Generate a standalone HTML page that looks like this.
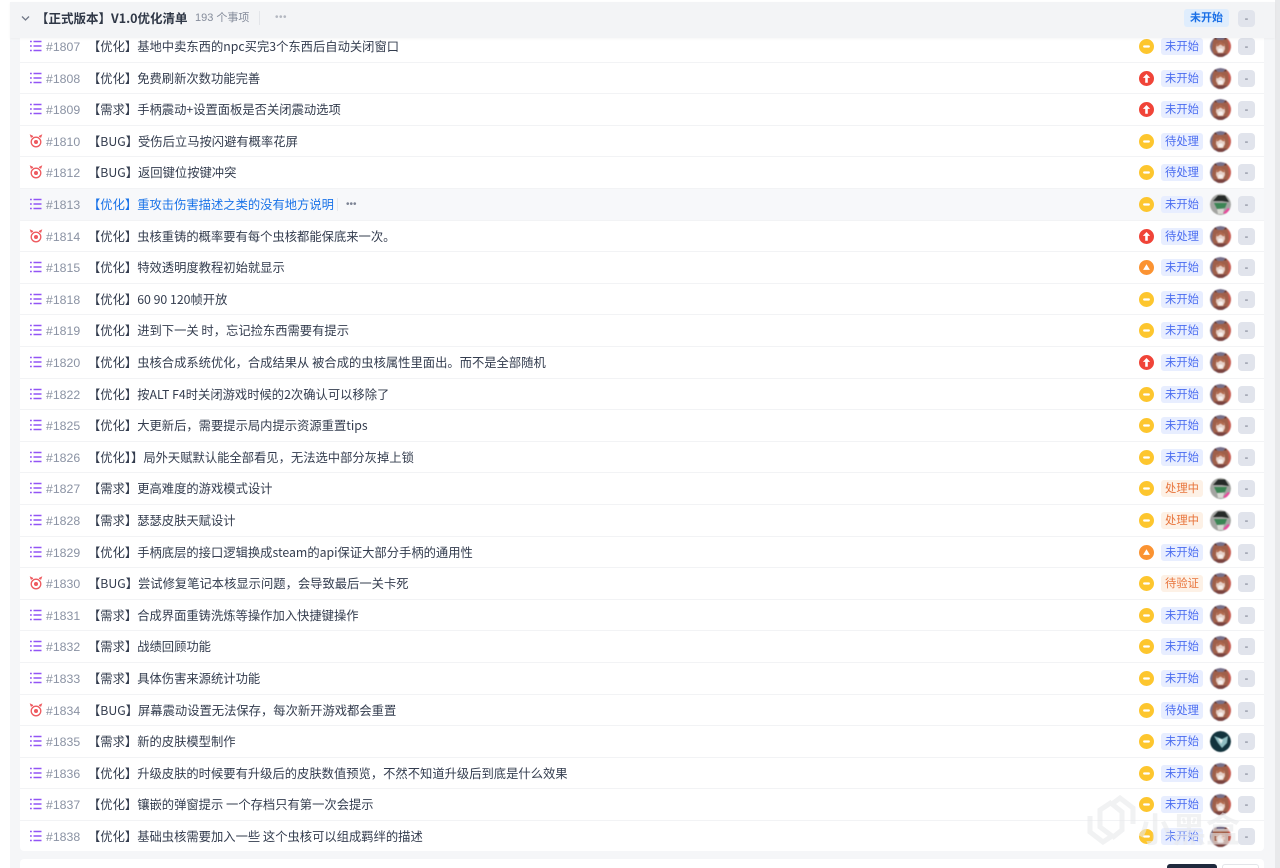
<!DOCTYPE html>
<html lang="zh-CN"><head><meta charset="utf-8"><title>V1.0优化清单</title>
<style>
html,body{margin:0;padding:0;width:1280px;height:868px;overflow:hidden;background:#fff}
body{position:relative;font-family:"Liberation Sans","Noto Sans CJK SC",sans-serif;font-size:12px;color:#333c4e}
.bg{position:absolute;left:10px;top:2px;width:1265px;height:866px;background:#f5f6f8}
.sb{position:absolute;left:1275px;top:0;width:5px;height:868px;background:#e8e9eb}
.hd{position:absolute;left:10px;top:2px;width:1265px;height:36px;background:#f3f4f6;box-shadow:0 1px 2px rgba(0,0,0,.04);z-index:3}
.list{position:absolute;left:20px;top:31px;width:1244px;height:820px;background:#fff;border-radius:0 0 4px 4px;overflow:hidden;filter:blur(.25px)}
.r{position:absolute;left:0;width:1244px;height:31.6px;box-sizing:border-box;border-bottom:1px solid #f2f3f5}
.r.last{border:0}
.r.h{background:#f7f8fa}
.r>*{position:absolute}
.ic{left:9px;top:8px;width:14px;height:14px}
.n{left:26px;top:8px;line-height:16px;font-size:12.3px;color:#8a92a3;white-space:nowrap}
.t{left:68px;top:7px;line-height:16px;font-size:12.3px;font-family:"Noto Sans CJK SC","Liberation Sans",sans-serif;white-space:nowrap}
.h .t{color:#1a73e8}
.p{left:1119px;top:8px;width:15px;height:15px}
.s{left:1141px;top:7px;width:42px;height:17px;line-height:17px;text-align:center;border-radius:3px;background:#e8eeff;color:#4a6cf0;font-size:11.3px;font-family:"Noto Sans CJK SC",sans-serif}
.s.o{background:#fdf1e6;color:#e8743b}
.a{left:1190px;top:5px;width:21px;height:21px;border-radius:50%;filter:blur(.5px)}
.d{left:1218px;top:7px;width:17px;height:17px;border-radius:4px;background:#e1e4ec;color:#6a7080;text-align:center;line-height:18px;font-size:11px}
.x{position:absolute;z-index:4;white-space:nowrap}
.foot{position:absolute;left:20px;top:859px;width:1244px;height:20px;background:#fff;border-radius:4px}
.wm{position:absolute;left:1085px;top:792px;z-index:6;opacity:.6}
</style></head><body>
<svg width="0" height="0" style="position:absolute">
<defs>
<symbol id="l" viewBox="0 0 14 14"><g fill="none" stroke="#9255f5" stroke-width="1.500"><path d="M4.500 2.500H12.500M4.500 7H12.500M4.500 11.500H12.500"/><path d="M1 2.500H2.800M1 7H2.800M1 11.500H2.800"/></g></symbol>
<symbol id="b" viewBox="0 0 14 14"><g fill="none" stroke="#ee5a5f" stroke-width="1.300"><circle cx="7" cy="8" r="4.800"/><path d="M2.500 3.600 1.800 1.500 4 2.600M11.500 3.600 12.200 1.500 10 2.600"/></g><circle cx="7" cy="8" r="2" fill="#ee5a5f"/></symbol>
<symbol id="py" viewBox="0 0 14 14"><circle cx="7" cy="7" r="7" fill="#fdc62e"/><rect x="3.800" y="6" width="6.400" height="2" rx="1" fill="#fff"/></symbol>
<symbol id="pr" viewBox="0 0 14 14"><circle cx="7" cy="7" r="7" fill="#f04438"/><path d="M7 2.800 10.400 6.400H8.200V11H5.800V6.400H3.600Z" fill="#fff"/></symbol>
<symbol id="po" viewBox="0 0 14 14"><circle cx="7" cy="7" r="7" fill="#fb9332"/><path d="M7 4 10.200 9.200H3.800Z" fill="#fff"/></symbol>
<symbol id="a1" viewBox="0 0 21 21"><circle cx="10.500" cy="10.500" r="10.500" fill="#77708a"/><path d="M15 0A10.500 10.500 0 0 1 21 10.500 10.500 10.500 0 0 1 17 19Z" fill="#cb5a4e"/><path d="M3 5 5 1 8 4 13 4 16 1 18 5 19 13 17 19H4L2 13Z" fill="#a0604a"/><path d="M4.500 3 5 1 7 3.500ZM16.500 3 16 1 14 3.500Z" fill="#4b2b2a"/><path d="M6.500 8H14.500L15 13 13 17H8L6 13Z" fill="#e6cfc6"/><path d="M6 9 10.500 5.500 15 9 13.500 10.500 10.500 8.500 7.500 10.500Z" fill="#b0694e"/><path d="M8.500 12.500H12.500L13 15.500 10.500 16.500 8 15.500Z" fill="#f6efec"/><path d="M4 17.500H17L13 21H8Z" fill="#7a4440"/></symbol>
<symbol id="a2" viewBox="0 0 21 21"><circle cx="10.500" cy="10.500" r="10.500" fill="#a3a4a1"/><path d="M3 7 8 1.500 15 1.500 19 8 12 7Z" fill="#252a28"/><path d="M4 9H17L15 14 7 15Z" fill="#3b8554"/><path d="M7 15H14L13 20H8Z" fill="#d7d9d3"/><path d="M13 19 18 14 20 15 16 20Z" fill="#e84a9c"/></symbol>
<symbol id="a3" viewBox="0 0 21 21"><circle cx="10.500" cy="10.500" r="10.500" fill="#12333d"/><path d="M4 5 12 8 18 5 17 12 12 17 8 12Z" fill="#8fbdc1"/><path d="M8 7 13 9 11 13Z" fill="#e2f0f0"/></symbol>
</defs></svg>

<div class="bg"></div><div class="sb"></div>
<div class="hd"></div>
<svg class="x" style="left:21px;top:15px" width="9" height="7" viewBox="0 0 9 7"><path d="M1 1.500 4.500 5 8 1.500" fill="none" stroke="#717887" stroke-width="1.300"/></svg>
<div class="x" style="left:36px;top:9px;line-height:18px;font-size:12.500px;font-weight:700;color:#2f3746;font-family:'Noto Sans CJK SC',sans-serif">【正式版本】V1.0优化清单</div>
<div class="x" style="left:195px;top:10px;line-height:16px;font-size:11px;color:#858c9b">193 个事项</div>
<div class="x" style="left:259px;top:11px;width:1px;height:14px;background:#e3e5e9"></div>
<div class="x" style="left:275px;top:11px;line-height:14px;font-size:10px;color:#b4b8c1;letter-spacing:.5px">•••</div>
<div class="x" style="left:1184px;top:9px;width:45px;height:18px;line-height:19px;text-align:center;border-radius:3px;background:#dfedfd;color:#1a6fe6;font-size:11px;font-weight:700">未开始</div>
<div class="x" style="left:1238px;top:10px;width:17px;height:17px;border-radius:4px;background:#e1e4ec;color:#6a7080;text-align:center;line-height:18px;font-size:11px">-</div>

<div class="list">
<div class="r" style="top:0"><svg class="ic"><use href="#l"/></svg><span class="n">#1807</span><span class="t">【优化】基地中卖东西的npc买完3个东西后自动关闭窗口</span><svg class="p"><use href="#py"/></svg><span class="s">未开始</span><svg class="a"><use href="#a1"/></svg><span class="d">-</span></div>
<div class="r" style="top:31.6px"><svg class="ic"><use href="#l"/></svg><span class="n">#1808</span><span class="t">【优化】免费刷新次数功能完善</span><svg class="p"><use href="#pr"/></svg><span class="s">未开始</span><svg class="a"><use href="#a1"/></svg><span class="d">-</span></div>
<div class="r" style="top:63.2px"><svg class="ic"><use href="#l"/></svg><span class="n">#1809</span><span class="t">【需求】手柄震动+设置面板是否关闭震动选项</span><svg class="p"><use href="#pr"/></svg><span class="s">未开始</span><svg class="a"><use href="#a1"/></svg><span class="d">-</span></div>
<div class="r" style="top:94.8px"><svg class="ic"><use href="#b"/></svg><span class="n">#1810</span><span class="t">【BUG】受伤后立马按闪避有概率花屏</span><svg class="p"><use href="#py"/></svg><span class="s">待处理</span><svg class="a"><use href="#a1"/></svg><span class="d">-</span></div>
<div class="r" style="top:126.4px"><svg class="ic"><use href="#b"/></svg><span class="n">#1812</span><span class="t">【BUG】返回键位按键冲突</span><svg class="p"><use href="#py"/></svg><span class="s">待处理</span><svg class="a"><use href="#a1"/></svg><span class="d">-</span></div>
<div class="r h" style="top:158px"><svg class="ic"><use href="#l"/></svg><span class="n">#1813</span><span class="t">【优化】重攻击伤害描述之类的没有地方说明</span><span style="left:317px;top:9px;width:1px;height:13px;background:#e6e8ec"></span><span style="left:326px;top:9px;line-height:14px;font-size:10px;color:#7d8494">•••</span><svg class="p"><use href="#py"/></svg><span class="s">未开始</span><svg class="a"><use href="#a2"/></svg><span class="d">-</span></div>
<div class="r" style="top:189.6px"><svg class="ic"><use href="#b"/></svg><span class="n">#1814</span><span class="t">【优化】虫核重铸的概率要有每个虫核都能保底来一次。</span><svg class="p"><use href="#pr"/></svg><span class="s">待处理</span><svg class="a"><use href="#a1"/></svg><span class="d">-</span></div>
<div class="r" style="top:221.2px"><svg class="ic"><use href="#l"/></svg><span class="n">#1815</span><span class="t">【优化】特效透明度教程初始就显示</span><svg class="p"><use href="#po"/></svg><span class="s">未开始</span><svg class="a"><use href="#a1"/></svg><span class="d">-</span></div>
<div class="r" style="top:252.8px"><svg class="ic"><use href="#l"/></svg><span class="n">#1818</span><span class="t">【优化】60 90 120帧开放</span><svg class="p"><use href="#py"/></svg><span class="s">未开始</span><svg class="a"><use href="#a1"/></svg><span class="d">-</span></div>
<div class="r" style="top:284.4px"><svg class="ic"><use href="#l"/></svg><span class="n">#1819</span><span class="t">【优化】进到下一关 时，忘记捡东西需要有提示</span><svg class="p"><use href="#py"/></svg><span class="s">未开始</span><svg class="a"><use href="#a1"/></svg><span class="d">-</span></div>
<div class="r" style="top:316px"><svg class="ic"><use href="#l"/></svg><span class="n">#1820</span><span class="t">【优化】虫核合成系统优化，合成结果从 被合成的虫核属性里面出。而不是全部随机</span><svg class="p"><use href="#pr"/></svg><span class="s">未开始</span><svg class="a"><use href="#a1"/></svg><span class="d">-</span></div>
<div class="r" style="top:347.6px"><svg class="ic"><use href="#l"/></svg><span class="n">#1822</span><span class="t">【优化】按ALT F4时关闭游戏时候的2次确认可以移除了</span><svg class="p"><use href="#py"/></svg><span class="s">未开始</span><svg class="a"><use href="#a1"/></svg><span class="d">-</span></div>
<div class="r" style="top:379.2px"><svg class="ic"><use href="#l"/></svg><span class="n">#1825</span><span class="t">【优化】大更新后，需要提示局内提示资源重置tips</span><svg class="p"><use href="#py"/></svg><span class="s">未开始</span><svg class="a"><use href="#a1"/></svg><span class="d">-</span></div>
<div class="r" style="top:410.8px"><svg class="ic"><use href="#l"/></svg><span class="n">#1826</span><span class="t">【优化】】局外天赋默认能全部看见，无法选中部分灰掉上锁</span><svg class="p"><use href="#py"/></svg><span class="s">未开始</span><svg class="a"><use href="#a1"/></svg><span class="d">-</span></div>
<div class="r" style="top:442.4px"><svg class="ic"><use href="#l"/></svg><span class="n">#1827</span><span class="t">【需求】更高难度的游戏模式设计</span><svg class="p"><use href="#py"/></svg><span class="s o">处理中</span><svg class="a"><use href="#a2"/></svg><span class="d">-</span></div>
<div class="r" style="top:474px"><svg class="ic"><use href="#l"/></svg><span class="n">#1828</span><span class="t">【需求】瑟瑟皮肤天赋设计</span><svg class="p"><use href="#py"/></svg><span class="s o">处理中</span><svg class="a"><use href="#a2"/></svg><span class="d">-</span></div>
<div class="r" style="top:505.6px"><svg class="ic"><use href="#l"/></svg><span class="n">#1829</span><span class="t">【优化】手柄底层的接口逻辑换成steam的api保证大部分手柄的通用性</span><svg class="p"><use href="#po"/></svg><span class="s">未开始</span><svg class="a"><use href="#a1"/></svg><span class="d">-</span></div>
<div class="r" style="top:537.2px"><svg class="ic"><use href="#b"/></svg><span class="n">#1830</span><span class="t">【BUG】尝试修复笔记本核显示问题，会导致最后一关卡死</span><svg class="p"><use href="#py"/></svg><span class="s o">待验证</span><svg class="a"><use href="#a1"/></svg><span class="d">-</span></div>
<div class="r" style="top:568.8px"><svg class="ic"><use href="#l"/></svg><span class="n">#1831</span><span class="t">【需求】合成界面重铸洗炼等操作加入快捷键操作</span><svg class="p"><use href="#py"/></svg><span class="s">未开始</span><svg class="a"><use href="#a1"/></svg><span class="d">-</span></div>
<div class="r" style="top:600.4px"><svg class="ic"><use href="#l"/></svg><span class="n">#1832</span><span class="t">【需求】战绩回顾功能</span><svg class="p"><use href="#py"/></svg><span class="s">未开始</span><svg class="a"><use href="#a1"/></svg><span class="d">-</span></div>
<div class="r" style="top:632px"><svg class="ic"><use href="#l"/></svg><span class="n">#1833</span><span class="t">【需求】具体伤害来源统计功能</span><svg class="p"><use href="#py"/></svg><span class="s">未开始</span><svg class="a"><use href="#a1"/></svg><span class="d">-</span></div>
<div class="r" style="top:663.6px"><svg class="ic"><use href="#b"/></svg><span class="n">#1834</span><span class="t">【BUG】屏幕震动设置无法保存，每次新开游戏都会重置</span><svg class="p"><use href="#py"/></svg><span class="s">待处理</span><svg class="a"><use href="#a1"/></svg><span class="d">-</span></div>
<div class="r" style="top:695.2px"><svg class="ic"><use href="#l"/></svg><span class="n">#1835</span><span class="t">【需求】新的皮肤模型制作</span><svg class="p"><use href="#py"/></svg><span class="s">未开始</span><svg class="a"><use href="#a3"/></svg><span class="d">-</span></div>
<div class="r" style="top:726.8px"><svg class="ic"><use href="#l"/></svg><span class="n">#1836</span><span class="t">【优化】升级皮肤的时候要有升级后的皮肤数值预览，不然不知道升级后到底是什么效果</span><svg class="p"><use href="#py"/></svg><span class="s">未开始</span><svg class="a"><use href="#a1"/></svg><span class="d">-</span></div>
<div class="r" style="top:758.4px"><svg class="ic"><use href="#l"/></svg><span class="n">#1837</span><span class="t">【优化】镶嵌的弹窗提示 一个存档只有第一次会提示</span><svg class="p"><use href="#py"/></svg><span class="s">未开始</span><svg class="a"><use href="#a1"/></svg><span class="d">-</span></div>
<div class="r last" style="top:790px"><svg class="ic"><use href="#l"/></svg><span class="n">#1838</span><span class="t">【优化】基础虫核需要加入一些 这个虫核可以组成羁绊的描述</span><svg class="p"><use href="#py"/></svg><span class="s">未开始</span><svg class="a"><use href="#a1"/></svg><span class="d">-</span></div>
</div>

<div class="foot"></div>
<div class="x" style="left:1167px;top:864px;width:50px;height:10px;background:#1f2a3d;border-radius:3px"></div>
<div class="x" style="left:1222px;top:864px;width:37px;height:10px;background:#fff;border:1px solid #e3e5e9;box-sizing:border-box;border-radius:3px"></div>

<svg class="wm" width="160" height="62" viewBox="0 0 160 62">
<g fill="none" stroke="#e9eaec" stroke-width="5"><path d="M5 24V40L18 50 27 44 15 35V18L27 10"/><path d="M48 32V16L35 6 27 12 37 20V38L27 46"/></g>
<text x="53" y="50" font-size="34" font-family="'Noto Sans CJK SC',sans-serif" font-weight="700" fill="#e9eaec" textLength="102">小黑盒</text>
</svg>
</body></html>
